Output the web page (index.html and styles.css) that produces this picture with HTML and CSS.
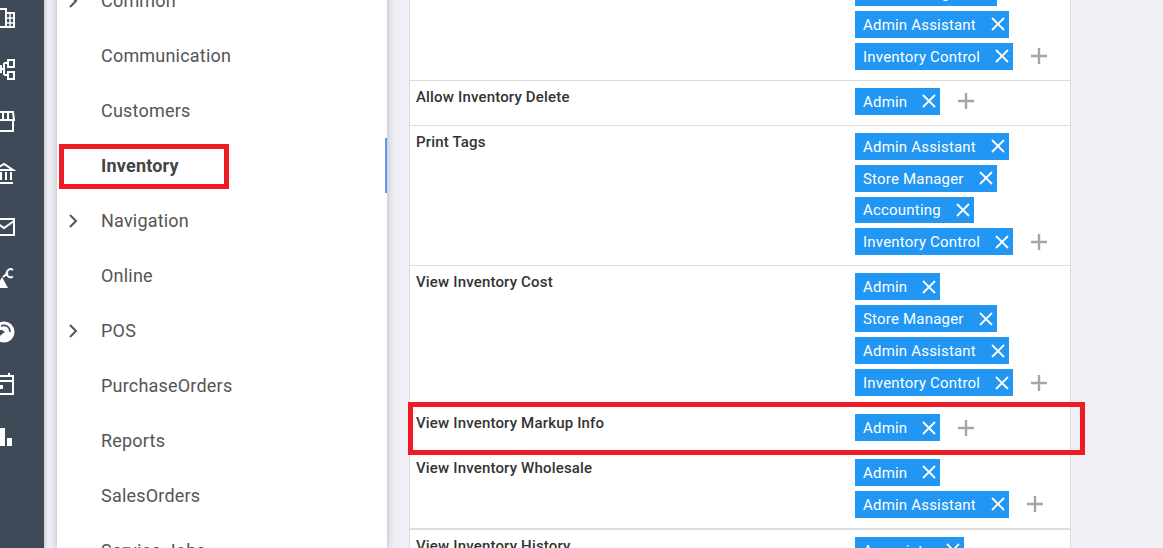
FILE: index.html
```html
<!DOCTYPE html>
<html lang="en">
<head>
  <meta charset="UTF-8">
  <title>Permissions</title>
  <link rel="stylesheet" href="styles.css">
</head>
<body>
  <div class="page">

    <!-- Icon rail -->
    <div class="rail">
      <div class="rail-item"><svg viewBox="0 0 16 24"><path d="M-4 4h10v18H-4zM6 8h8v14H6z" class="line"/><path d="M6 13h8M6 18h8M10 8v14" class="thin"/></svg></div>
      <div class="rail-item"><svg viewBox="0 0 16 24"><path d="M8 3h6v7H8zM8 15h6v7H8zM0 12h4M4 6v12M4 6h4M4 18h4M-3 9h4v6h-4z" class="line"/></svg></div>
      <div class="rail-item"><svg viewBox="0 0 16 24"><path d="M-4 2h17l1 8H-4z" class="line"/><path d="M3 2v8M8 2v8" class="line"/><path d="M13 11v10H-4" class="line"/></svg></div>
      <div class="rail-item"><svg viewBox="0 0 16 24"><path d="M-6 8 4 2l9 6z" class="line"/><path d="M-6 21h19" class="line"/><path d="M1 10v8M6 10v8M11 10v8" class="line"/></svg></div>
      <div class="rail-item"><svg viewBox="0 0 16 24"><path d="M-6 4h20v16H-6z" class="line"/><path d="M-6 6 4 13l10-7" class="line"/></svg></div>
      <div class="rail-item"><svg viewBox="0 0 16 24"><path d="M-4 21 2 10l6 11z" class="solid"/><path d="M3 10l5-4" class="line"/><path d="M13 3a4 4 0 1 0 0 6.500" class="line"/></svg></div>
      <div class="rail-item"><svg viewBox="0 0 16 24"><circle cx="4" cy="12" r="10.500" class="solid"/><path d="M1 6c5-2 9 1 9 6" class="cut-line"/><path d="M-2 10h4l3 2-3 2-2 2h-2z" class="cut"/></svg></div>
      <div class="rail-item"><svg viewBox="0 0 16 24"><path d="M-6 4h19v18H-6z" class="line"/><path d="M-6 9h19M9 1v4" class="line"/><path d="M-1 13h4v4h-4z" class="solid"/></svg></div>
      <div class="rail-item"><svg viewBox="0 0 16 24"><path d="M0 3h5v18H0zM7 13h5v8H7z" class="solid"/></svg></div>
    </div>

    <!-- Settings menu -->
    <div class="menu">
      <div class="menu-item"><svg class="chevron" viewBox="0 0 12 16"><path d="M2 2l6 6-6 6"/></svg>Common</div>
      <div class="menu-item">Communication</div>
      <div class="menu-item">Customers</div>
      <div class="menu-item active">Inventory</div>
      <div class="menu-item"><svg class="chevron" viewBox="0 0 12 16"><path d="M2 2l6 6-6 6"/></svg>Navigation</div>
      <div class="menu-item">Online</div>
      <div class="menu-item"><svg class="chevron" viewBox="0 0 12 16"><path d="M2 2l6 6-6 6"/></svg>POS</div>
      <div class="menu-item">PurchaseOrders</div>
      <div class="menu-item">Reports</div>
      <div class="menu-item">SalesOrders</div>
      <div class="menu-item">Service Jobs</div>
    </div>

    <!-- Permissions table -->
    <div class="content">
      <div class="perm-table">
        <div class="perm-row">
          <div class="perm-name">Allow Inventory Edit</div>
          <div class="chips">
            <span class="chip">Store Manager<svg viewBox="0 0 14 14"><path d="M1 1l12 12M13 1L1 13"/></svg></span>
            <span class="chip">Admin Assistant<svg viewBox="0 0 14 14"><path d="M1 1l12 12M13 1L1 13"/></svg></span>
            <span class="chip">Inventory Control<svg viewBox="0 0 14 14"><path d="M1 1l12 12M13 1L1 13"/></svg></span><svg class="plus" viewBox="0 0 16 16"><path d="M8 0v16M0 8h16"/></svg>
          </div>
        </div>
        <div class="perm-row">
          <div class="perm-name">Allow Inventory Delete</div>
          <div class="chips">
            <span class="chip">Admin<svg viewBox="0 0 14 14"><path d="M1 1l12 12M13 1L1 13"/></svg></span><svg class="plus" viewBox="0 0 16 16"><path d="M8 0v16M0 8h16"/></svg>
          </div>
        </div>
        <div class="perm-row">
          <div class="perm-name">Print Tags</div>
          <div class="chips">
            <span class="chip">Admin Assistant<svg viewBox="0 0 14 14"><path d="M1 1l12 12M13 1L1 13"/></svg></span>
            <span class="chip">Store Manager<svg viewBox="0 0 14 14"><path d="M1 1l12 12M13 1L1 13"/></svg></span>
            <span class="chip">Accounting<svg viewBox="0 0 14 14"><path d="M1 1l12 12M13 1L1 13"/></svg></span>
            <span class="chip">Inventory Control<svg viewBox="0 0 14 14"><path d="M1 1l12 12M13 1L1 13"/></svg></span><svg class="plus" viewBox="0 0 16 16"><path d="M8 0v16M0 8h16"/></svg>
          </div>
        </div>
        <div class="perm-row">
          <div class="perm-name">View Inventory Cost</div>
          <div class="chips">
            <span class="chip">Admin<svg viewBox="0 0 14 14"><path d="M1 1l12 12M13 1L1 13"/></svg></span>
            <span class="chip">Store Manager<svg viewBox="0 0 14 14"><path d="M1 1l12 12M13 1L1 13"/></svg></span>
            <span class="chip">Admin Assistant<svg viewBox="0 0 14 14"><path d="M1 1l12 12M13 1L1 13"/></svg></span>
            <span class="chip">Inventory Control<svg viewBox="0 0 14 14"><path d="M1 1l12 12M13 1L1 13"/></svg></span><svg class="plus" viewBox="0 0 16 16"><path d="M8 0v16M0 8h16"/></svg>
          </div>
        </div>
        <div class="perm-row">
          <div class="perm-name">View Inventory Markup Info</div>
          <div class="chips">
            <span class="chip">Admin<svg viewBox="0 0 14 14"><path d="M1 1l12 12M13 1L1 13"/></svg></span><svg class="plus" viewBox="0 0 16 16"><path d="M8 0v16M0 8h16"/></svg>
          </div>
        </div>
        <div class="perm-row last-in-group">
          <div class="perm-name">View Inventory Wholesale</div>
          <div class="chips">
            <span class="chip">Admin<svg viewBox="0 0 14 14"><path d="M1 1l12 12M13 1L1 13"/></svg></span>
            <span class="chip">Admin Assistant<svg viewBox="0 0 14 14"><path d="M1 1l12 12M13 1L1 13"/></svg></span><svg class="plus" viewBox="0 0 16 16"><path d="M8 0v16M0 8h16"/></svg>
          </div>
        </div>
        <div class="perm-row">
          <div class="perm-name">View Inventory History</div>
          <div class="chips">
            <span class="chip">Associate<svg viewBox="0 0 14 14"><path d="M1 1l12 12M13 1L1 13"/></svg></span>
          </div>
        </div>
      </div>
    </div>

    <!-- Annotations -->
    <div class="mark mark-menu"></div>
    <div class="mark mark-row"></div>
  </div>
</body>
</html>
```

FILE: styles.css
```css
* {
  box-sizing: border-box;
}

body {
  margin: 0;
  font-family: 'Roboto', sans-serif;
  background: #efeff5;
  color: #333;
}

.page {
  position: relative;
  display: flex;
  height: 548px;
  overflow: hidden;
}

.rail {
  flex: 0 0 44px;
  margin-top: -9.5px;
  margin-bottom: -9px;
  background: #3f4a58;
  box-shadow: 1px 0 4px rgba(0, 0, 0, 0.2);
}

.rail-item {
  height: 52.5px;
  display: flex;
  align-items: center;
}

.rail-item svg {
  width: 16px;
  height: 24px;
  display: block;
}

.rail-item .line {
  fill: none;
  stroke: #fff;
  stroke-width: 2;
}

.rail-item .thin {
  fill: none;
  stroke: #fff;
  stroke-width: 1.5;
}

.rail-item .solid {
  fill: #fff;
}

.rail-item .cut {
  fill: #3f4a58;
}

.rail-item .cut-line {
  fill: none;
  stroke: #3f4a58;
  stroke-width: 1.6;
}

.menu {
  flex: 0 0 330px;
  margin-left: 13px;
  margin-top: -27px;
  background: #fff;
  box-shadow: 0 0 8px rgba(0, 0, 0, 0.25);
  position: relative;
}

.menu-item {
  position: relative;
  height: 55px;
  display: flex;
  align-items: center;
  padding-left: 44px;
  font-size: 18px;
  letter-spacing: 0.2px;
  color: #555;
}

.menu-item.active {
  font-weight: 700;
  color: #444;
}

.menu-item.active::after {
  content: "";
  position: absolute;
  right: 0;
  top: 0;
  bottom: 0;
  width: 2px;
  background: #5b9bea;
}

.chevron {
  position: absolute;
  left: 11px;
  top: 20px;
  width: 12px;
  height: 16px;
  fill: none;
  stroke: #555;
  stroke-width: 2;
}

.content {
  flex: 0 0 662px;
  min-width: 0;
  margin-left: 22px;
  margin-top: -28px;
}

.perm-table {
  background: #fff;
  border-left: 1px solid #ddd;
  border-right: 1px solid #ddd;
  height: 620px;
}

.perm-row {
  display: grid;
  grid-template-columns: 445px 1fr;
  padding: 7px 0 10.1px;
  border-bottom: 1px solid #ddd;
}

.perm-row.last-in-group {
  border-bottom: 2px solid #ddd;
}

.perm-name {
  padding-left: 6px;
  font-size: 15px;
  font-weight: 500;
  letter-spacing: 0.17px;
  line-height: 19.5px;
  color: #333;
}

.chips {
  display: flex;
  flex-wrap: wrap;
  align-items: center;
  align-content: flex-start;
  gap: 5px 0;
  max-width: 200px;
}

.chip {
  display: flex;
  align-items: center;
  gap: 15px;
  height: 26.9px;
  padding: 1px 4px 0 8px;
  background: #2196f3;
  color: #fff;
  font-size: 15px;
  letter-spacing: 0.2px;
}

.chip svg {
  width: 14px;
  height: 14px;
  margin-top: -1px;
  fill: none;
  stroke: #fff;
  stroke-width: 1.8;
}

.plus {
  flex: 0 0 16px;
  width: 16px;
  height: 16px;
  margin-left: 18px;
  fill: none;
  stroke: #a6a6a6;
  stroke-width: 2.4;
}

.mark {
  position: absolute;
  border: 5px solid #ed1c24;
  pointer-events: none;
}

.mark-menu {
  left: 59px;
  top: 144px;
  width: 170px;
  height: 45px;
}

.mark-row {
  left: 408px;
  top: 402px;
  width: 677px;
  height: 53px;
}
```
